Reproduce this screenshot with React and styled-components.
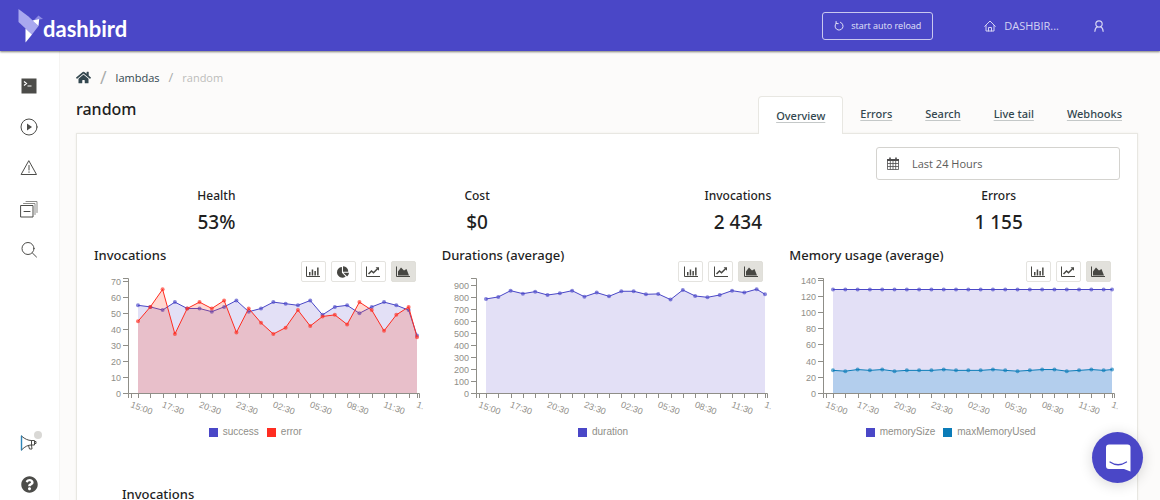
import React, { useLayoutEffect, useRef, useState } from "react";
import styled, { createGlobalStyle } from "styled-components";
import { FaHome, FaChartPie, FaQuestionCircle } from "react-icons/fa";

const GlobalStyle = createGlobalStyle`
  * { box-sizing: border-box; }
  body {
    margin: 0;
    background: #fcfbfa;
    color: #1f1f1f;
    font-family: "Open Sans", "Noto Sans", sans-serif;
    font-size: 11px;
  }
  h1, h2, p, dl, dt, dd, ul, ol { margin: 0; padding: 0; }
  ul, ol { list-style: none; }
  button { font-family: inherit; cursor: pointer; }
  svg { display: block; }
`;

const mediumFont = `"Noto Sans", "Open Sans", sans-serif`;

const Page = styled.div`
  height: 100vh;
  display: flex;
  flex-direction: column;
`;

const Header = styled.header`
  position: relative;
  z-index: 2;
  flex: none;
  height: 51px;
  padding: 0 55px 0 18px;
  display: flex;
  align-items: center;
  background: #4a47c7;
  box-shadow: 0 1px 2px rgba(40, 40, 30, 0.6);
`;

const Logo = styled.a`
  display: flex;
  align-items: center;
  color: #fff;
  text-decoration: none;
  margin-right: auto;
`;

const LogoName = styled.span`
  font-family: Lato, sans-serif;
  font-weight: 700;
  font-size: 22px;
  line-height: 24px;
  padding-top: 6px;
`;

const ReloadButton = styled.button`
  display: flex;
  align-items: center;
  justify-content: center;
  gap: 7px;
  width: 111px;
  height: 28px;
  padding: 0;
  margin-right: 51px;
  border: 1px solid #c9c8ef;
  border-radius: 3px;
  background: transparent;
  color: #e4e3f8;
  font-size: 9px;
`;

const HeaderLink = styled.a`
  display: flex;
  align-items: center;
  gap: 8px;
  margin-right: ${(p) => p.$gap || 0}px;
  color: #d4d3f3;
  font-size: 11px;
  text-decoration: none;
`;

const Body = styled.div`
  flex: 1;
  min-height: 0;
  display: flex;
`;

const Sidebar = styled.nav`
  flex: none;
  width: 60px;
  padding: 24px 0 5px;
  display: flex;
  flex-direction: column;
  justify-content: space-between;
  background: #fff;
  border-right: 1px solid #f5f4f2;
`;

const SideGroup = styled.ul`
  display: flex;
  flex-direction: column;
  gap: 19px;
`;

const SideLink = styled.a`
  position: relative;
  display: flex;
  align-items: center;
  justify-content: center;
  height: 22px;
  margin-right: 1px;
  color: #4c4c49;
`;

const NewsDot = styled.span`
  position: absolute;
  top: -1px;
  left: 34px;
  width: 8px;
  height: 8px;
  border-radius: 50%;
  background: #d9d8d5;
`;

const Main = styled.main`
  flex: 1;
  min-width: 0;
  overflow-y: auto;
  scrollbar-width: none;
  padding: 17px 22px 0 16px;
`;

const Breadcrumb = styled.ol`
  display: flex;
  align-items: center;
  gap: 9px;
  height: 18px;
  color: #bdbdba;
  a { color: #33474f; text-decoration: none; }
`;

const Slash = styled.li`
  font-size: ${(p) => (p.$large ? 18 : 13)}px;
  line-height: 20px;
  color: #a9acab;
`;

const TitleRow = styled.div`
  display: flex;
  align-items: flex-end;
  justify-content: space-between;
  height: 48px;
  position: relative;
  z-index: 1;
  margin-bottom: -1px;
`;

const Title = styled.h1`
  align-self: flex-start;
  padding-top: 11px;
  font-family: ${mediumFont};
  font-size: 16px;
  line-height: 24px;
  font-weight: 500;
`;

const Tabs = styled.nav`
  display: flex;
  align-items: flex-end;
`;

const Tab = styled.a`
  height: 38px;
  padding: ${(p) => (p.$active ? "10px 17px 0" : "9px 0 0")};
  margin-right: ${(p) => (p.$active ? 17 : p.$last ? 16 : 33)}px;
  border: ${(p) => (p.$active ? "1px solid #e8e7e2" : "0")};
  border-bottom: 0;
  border-radius: 4px 4px 0 0;
  background: ${(p) => (p.$active ? "#fff" : "transparent")};
  color: #33474f;
  font-family: ${mediumFont};
  font-weight: 500;
  line-height: 18px;
  text-decoration: underline 1px #c4c8c8;
  text-underline-offset: 2px;
`;

const Panel = styled.section`
  min-height: 500px;
  padding: 13px 8px 40px 9px;
  border: 1px solid #e8e7e2;
  box-shadow: 0 0 2px #efeeea;
  background: #fff;
`;

const RangeButton = styled.button`
  display: flex;
  align-items: center;
  gap: 13px;
  width: 244px;
  height: 33px;
  margin: 0 9px 0 auto;
  padding: 0 10px;
  border: 1px solid #d4d3cf;
  border-radius: 3px;
  background: #fff;
  color: #5c5c5a;
  font-size: 11px;
`;

const Stats = styled.dl`
  display: grid;
  grid-template-columns: repeat(4, 1fr);
  margin-top: 6px;
  text-align: center;
`;

const StatName = styled.dt`
  font-family: ${mediumFont};
  font-size: 12px;
  line-height: 20px;
  font-weight: 500;
`;

const StatValue = styled.dd`
  font-family: ${mediumFont};
  font-size: 19px;
  line-height: 33px;
  font-weight: 500;
`;

const Charts = styled.div`
  display: grid;
  grid-template-columns: repeat(3, 1fr);
  margin-top: 8px;
`;

const ChartCell = styled.figure`
  min-width: 0;
  margin: 0;
  padding: 0 8px;
`;

const ChartTitle = styled.figcaption`
  font-family: ${mediumFont};
  font-size: 13px;
  line-height: 16px;
  font-weight: 500;
`;

const Toolbar = styled.div`
  position: relative;
  z-index: 1;
  display: flex;
  justify-content: flex-end;
  gap: 5px;
  padding-right: 10px;
  margin: -2px 0 -8px;
`;

const KindButton = styled.button`
  display: flex;
  align-items: center;
  justify-content: center;
  width: 25px;
  height: 21px;
  padding: 0;
  border: 1px solid ${(p) => (p.$active ? "#e0dfd9" : "#e4e3df")};
  border-radius: 2px;
  background: ${(p) => (p.$active ? "#e2e1dc" : "#fff")};
  color: #474743;
`;

const Plot = styled.svg`
  width: 100%;
  height: 148px;
  overflow: hidden;
  text {
    font-family: "Liberation Sans", Arial, sans-serif;
    font-size: 9px;
    fill: #8f8e88;
  }
`;

const Legend = styled.ul`
  display: flex;
  justify-content: center;
  gap: 8px;
  margin: 3px 9px 0 0;
  font: 10px/14px "Liberation Sans", Arial, sans-serif;
  color: #8f8e88;
`;

const LegendItem = styled.li`
  display: flex;
  align-items: center;
  gap: 5px;
  &::before {
    content: "";
    width: 9px;
    height: 9px;
    background: ${(p) => p.$color};
  }
`;

const SectionTitle = styled.h2`
  margin: 47px 0 0 36px;
  font-family: ${mediumFont};
  font-size: 13px;
  line-height: 16px;
  font-weight: 500;
`;

const ChatButton = styled.button`
  position: fixed;
  z-index: 3;
  right: 17px;
  bottom: 17px;
  display: flex;
  align-items: center;
  justify-content: center;
  width: 51px;
  height: 51px;
  padding: 0;
  border: 0;
  border-radius: 50%;
  background: #4a47c7;
  box-shadow: 0 2px 14px rgba(0, 0, 0, 0.16);
`;

/* ---------- icons ---------- */

const Line = ({ size, box = size, width = 1, children }) => (
  <svg width={size} height={size} viewBox={`0 0 ${box} ${box}`} fill="none" stroke="currentColor"
    strokeWidth={width} strokeLinejoin="round" strokeLinecap="round" aria-hidden="true">
    {children}
  </svg>
);

const BirdMark = () => (
  <svg width="25" height="36" viewBox="0 0 25 36" aria-hidden="true">
    <path d="M0.5 1 10.5 8.5 20.5 18 14 26.5 0.5 14Z" fill="#a9a8ef" />
    <path d="M16 12 20.500 7.500 25 11 21 11.500Z" fill="#8c8ae4" />
    <path d="M14.500 12.500 21.200 11 20.500 18Z" fill="#fff" />
    <path d="M7.500 20.500 14 26.500 7.500 34.500Z" fill="#fff" />
  </svg>
);

const ReloadIcon = () => (
  <Line size={10} width={1}>
    <path d="M6.500 1.300A4 4 0 1 1 2.300 2.100" />
    <path d="M2.100 0.500V2.600H4.200" />
  </Line>
);

const HouseIcon = () => (
  <Line size={12} width={1}>
    <path d="M0.700 6.300 6 1 11.300 6.300M2 5.500V11H10V5.500M4.500 11V7.500H7.500V11" />
  </Line>
);

const UserIcon = () => (
  <Line size={12} width={1.2}>
    <circle cx="6" cy="4" r="3.200" />
    <path d="M4.400 6.800C2.600 7.600 2 9.300 1.900 11.300M7.600 6.800C9.400 7.600 10 9.300 10.100 11.300" />
  </Line>
);

const TerminalIcon = () => (
  <svg width="16" height="16" viewBox="0 0 16 16" aria-hidden="true">
    <rect x="0.500" y="0.500" width="15" height="15" fill="currentColor" />
    <path d="M3 3.500 5.500 5.500 3 7.500M6.500 8H10.500" fill="none" stroke="#fff" strokeWidth="1.200" />
  </svg>
);

const PlayIcon = () => (
  <Line size={18}>
    <circle cx="9" cy="9" r="8" />
    <path d="M7 5.500V12.500L12 9Z" fill="currentColor" stroke="none" />
  </Line>
);

const WarningIcon = () => (
  <Line size={18}>
    <path d="M9 2 16.500 15.500H1.500Z" />
    <path d="M9 6.500V11M9 12.800V13.400" />
  </Line>
);

const StackIcon = () => (
  <Line size={18}>
    <rect x="1" y="5.500" width="12" height="11.500" />
    <path d="M3.500 3.500H15V14.500M6 1.500H17V12.500" stroke="#8b8b88" />
    <path d="M4 11.500H10" />
  </Line>
);

const SearchIcon = () => (
  <Line size={18}>
    <circle cx="8" cy="7.500" r="6" />
    <path d="M12.400 12 16.500 16" />
  </Line>
);

const HornIcon = () => (
  <Line size={18} width={1}>
    <path d="M1.500 2V16" stroke="#2f86b8" strokeWidth="1.400" />
    <path d="M2 2.500C5 5 8 6.500 11.500 6.500H14.500V11H11.500C8 11 5 12.500 2 15.500" />
    <path d="M11.500 6.500V11M8.500 11.500 9.500 15H12L11.500 11M14.500 7.500H16V9.500H14.500" />
  </Line>
);

const CalendarIcon = () => (
  <svg width="12" height="13" viewBox="0 0 12 13" fill="none" stroke="#4c4b4c" aria-hidden="true">
    <path d="M0 3H12" strokeWidth="2" />
    <path d="M3 0.500V3M9 0.500V3" strokeWidth="1.600" />
    <path d="M0.500 3V12.500H11.500V3M3.300 4V12.500M6 4V12.500M8.700 4V12.500M0.500 6.500H11.500M0.500 9.500H11.500" strokeWidth="0.800" />
  </svg>
);

const axes = <path d="M0.500 0.500V10.500H14" fill="none" stroke="currentColor" />;

const kindIcons = {
  bar: (
    <svg width="14" height="11" viewBox="0 0 14 11" aria-hidden="true">
      {axes}
      <path d="M3 6H4.500V9.500H3ZM5.700 3.500H7.200V9.500H5.700ZM8.400 5H9.900V9.500H8.400ZM11.100 1.500H12.600V9.500H11.100Z" fill="currentColor" />
    </svg>
  ),
  pie: <FaChartPie size={12} />,
  line: (
    <svg width="14" height="11" viewBox="0 0 14 11" aria-hidden="true">
      {axes}
      <path d="M2.500 8 5.500 5 7.500 6.800 11.500 2.800" fill="none" stroke="currentColor" strokeWidth="1.500" />
      <path d="M9.600 1.300H13V4.700Z" fill="currentColor" />
    </svg>
  ),
  area: (
    <svg width="14" height="11" viewBox="0 0 14 11" aria-hidden="true">
      {axes}
      <path d="M2 9.500V5.500L5 1.500 8 4.500 10.500 3 13 9.500Z" fill="currentColor" />
    </svg>
  ),
};

const kindNames = { bar: "Bar chart", pie: "Pie chart", line: "Line chart", area: "Area chart" };

/* ---------- charts ---------- */

const PLOT_TOP = 5;
const PLOT_BOTTOM = 119;
const AXIS_LEFT = 34;
const COUNT = 24;
const timeLabels = [
  [2, "17:30"], [5, "20:30"], [8, "23:30"], [11, "02:30"], [14, "05:30"], [17, "08:30"], [20, "11:30"], [23, "1."],
];

function AreaChart({ label, series, ticks, max }) {
  const ref = useRef(null);
  const [width, setWidth] = useState(331);

  useLayoutEffect(() => {
    const measure = () => setWidth(Math.floor(ref.current.getBoundingClientRect().width));
    measure();
    const observer = new ResizeObserver(measure);
    observer.observe(ref.current);
    return () => observer.disconnect();
  }, []);

  const right = width - 5;
  const first = AXIS_LEFT + 10;
  const last = right - 3;
  const step = (last - first) / (COUNT - 1.32);
  const x = (i) => (i === COUNT - 1 ? last : first + i * step);
  const y = (v) => PLOT_BOTTOM - (v / max) * (PLOT_BOTTOM - PLOT_TOP);
  const snap = (v) => Math.round(v) + 0.5;
  const tickXs = [AXIS_LEFT + 4, ...Array.from({ length: COUNT }, (_, i) => x(i))];

  return (
    <Plot ref={ref} role="img" aria-label={label}>
      {series.map(({ name, color, fill, values }) => {
        const points = values.map((v, i) => `${x(i)},${y(v)}`);
        return (
          <g key={name}>
            <polygon points={`${x(0)},${PLOT_BOTTOM} ${points.join(" ")} ${last},${PLOT_BOTTOM}`} fill={fill} />
            <polyline points={points.join(" ")} fill="none" stroke={color} />
            {values.map((v, i) => <circle key={i} cx={x(i)} cy={y(v)} r="2" fill={color} fillOpacity="0.65" />)}
          </g>
        );
      })}
      <g stroke="#8f8e88" fill="none">
        <path d={`M${AXIS_LEFT - 5} ${PLOT_TOP - 0.5}H${AXIS_LEFT + 0.5}V${PLOT_BOTTOM + 0.5}H${AXIS_LEFT - 5}`} />
        <path d={`M${AXIS_LEFT + 0.5} ${PLOT_BOTTOM + 5}V${PLOT_BOTTOM + 0.5}H${right - 0.5}V${PLOT_BOTTOM + 5}`} />
        {ticks.map((t) => <path key={t} d={`M${AXIS_LEFT - 5} ${snap(y(t))}H${AXIS_LEFT}`} />)}
        {tickXs.map((t, i) => <path key={i} d={`M${snap(t) - (i ? 0 : 1)} ${PLOT_BOTTOM}V${PLOT_BOTTOM + 5}`} />)}
      </g>
      {ticks.map((t) => <text key={t} x={AXIS_LEFT - 7} y={y(t) + 4} textAnchor="end">{t}</text>)}
      <text transform={`translate(${AXIS_LEFT + 2} ${PLOT_BOTTOM + 14}) rotate(20)`}>15:00</text>
      {timeLabels.map(([i, t]) => (
        <text key={t} transform={`translate(${x(i) - 1} ${PLOT_BOTTOM + 14}) rotate(20)`}>{t}</text>
      ))}
    </Plot>
  );
}

const purple = "#4a47c7";
const purpleFill = "rgba(70, 44, 195, 0.15)";
const charts = [
  {
    title: "Invocations",
    kinds: ["bar", "pie", "line", "area"],
    max: 71.5,
    ticks: [0, 10, 20, 30, 40, 50, 60, 70],
    series: [
      { name: "success", color: purple, fill: purpleFill, values: [55, 54, 52, 57, 53, 53, 51, 54, 58, 51, 53, 57, 56, 55, 58, 49, 54, 55, 50, 54, 57, 55, 52, 36] },
      { name: "error", color: "#ff2d21", fill: "rgba(255, 60, 30, 0.2)", values: [45, 54, 65, 37, 53, 57, 53, 58, 38, 53, 44, 37, 41, 52, 42, 48, 49, 43, 57, 52, 39, 49, 54, 35] },
    ],
  },
  {
    title: "Durations (average)",
    kinds: ["bar", "line", "area"],
    max: 947,
    ticks: [0, 100, 200, 300, 400, 500, 600, 700, 800, 900],
    series: [
      { name: "duration", color: purple, fill: purpleFill, values: [781, 798, 850, 825, 842, 814, 828, 850, 800, 834, 803, 845, 845, 820, 823, 776, 856, 806, 795, 814, 850, 834, 862, 820] },
    ],
  },
  {
    title: "Memory usage (average)",
    kinds: ["bar", "line", "area"],
    max: 141,
    ticks: [0, 20, 40, 60, 80, 100, 120, 140],
    series: [
      { name: "memorySize", color: purple, fill: purpleFill, values: Array(24).fill(128) },
      { name: "maxMemoryUsed", color: "#0b7cb8", fill: "rgba(11, 140, 205, 0.22)", values: [28, 27, 29, 28, 29, 27, 28, 28, 28, 29, 28, 28, 28, 29, 28, 27, 28, 29, 29, 27, 28, 29, 28, 29] },
    ],
  },
];

const stats = [["Health", "53%"], ["Cost", "$0"], ["Invocations", "2 434"], ["Errors", "1 155"]];
const tabs = ["Overview", "Errors", "Search", "Live tail", "Webhooks"];
const sideTop = [
  ["Console", <TerminalIcon />], ["Live", <PlayIcon />], ["Alerts", <WarningIcon />],
  ["Projects", <StackIcon />], ["Search", <SearchIcon />],
];

export default function App() {
  return (
    <Page>
      <GlobalStyle />
      <Header>
        <Logo href="#home"><BirdMark /><LogoName>dashbird</LogoName></Logo>
        <ReloadButton type="button"><ReloadIcon />start auto reload</ReloadButton>
        <HeaderLink href="#account" $gap={34}><HouseIcon />DASHBIR...</HeaderLink>
        <HeaderLink href="#profile" aria-label="Profile"><UserIcon /></HeaderLink>
      </Header>
      <Body>
        <Sidebar aria-label="Main">
          <SideGroup>
            {sideTop.map(([name, icon]) => (
              <li key={name}><SideLink href={`#${name}`} aria-label={name}>{icon}</SideLink></li>
            ))}
          </SideGroup>
          <SideGroup>
            <li><SideLink href="#news" aria-label="News"><HornIcon /><NewsDot /></SideLink></li>
            <li><SideLink href="#help" aria-label="Help"><FaQuestionCircle size={17} /></SideLink></li>
          </SideGroup>
        </Sidebar>
        <Main>
          <Breadcrumb>
            <li><a href="#home" aria-label="Home"><FaHome size={15} /></a></li>
            <Slash $large aria-hidden="true">/</Slash>
            <li><a href="#lambdas">lambdas</a></li>
            <Slash aria-hidden="true">/</Slash>
            <li aria-current="page">random</li>
          </Breadcrumb>
          <TitleRow>
            <Title>random</Title>
            <Tabs aria-label="Sections">
              {tabs.map((name, i) => (
                <Tab key={name} href={`#${name}`} $active={i === 0} $last={i === tabs.length - 1}>{name}</Tab>
              ))}
            </Tabs>
          </TitleRow>
          <Panel>
            <RangeButton type="button"><CalendarIcon />Last 24 Hours</RangeButton>
            <Stats>
              {stats.map(([name, value]) => (
                <div key={name}><StatName>{name}</StatName><StatValue>{value}</StatValue></div>
              ))}
            </Stats>
            <Charts>
              {charts.map((c) => (
                <ChartCell key={c.title}>
                  <ChartTitle>{c.title}</ChartTitle>
                  <Toolbar>
                    {c.kinds.map((k) => (
                      <KindButton key={k} type="button" aria-label={kindNames[k]} aria-pressed={k === "area"} $active={k === "area"}>
                        {kindIcons[k]}
                      </KindButton>
                    ))}
                  </Toolbar>
                  <AreaChart label={c.title} series={c.series} ticks={c.ticks} max={c.max} />
                  <Legend>
                    {c.series.map((s) => <LegendItem key={s.name} $color={s.color}>{s.name}</LegendItem>)}
                  </Legend>
                </ChartCell>
              ))}
            </Charts>
            <SectionTitle>Invocations</SectionTitle>
          </Panel>
        </Main>
      </Body>
      <ChatButton type="button" aria-label="Open chat">
        <svg width="26" height="28" viewBox="0 0 26 28" aria-hidden="true">
          <path d="M4 0.500H22.500Q25.500 0.500 25.500 3.500V27.500L19 25H4Q1 25 1 22V3.500Q1 0.500 4 0.500Z" fill="#fff" />
          <path d="M5 18Q13 23.500 21.500 18" fill="none" stroke="#4a47c7" strokeWidth="1.300" strokeLinecap="round" />
        </svg>
      </ChatButton>
    </Page>
  );
}
